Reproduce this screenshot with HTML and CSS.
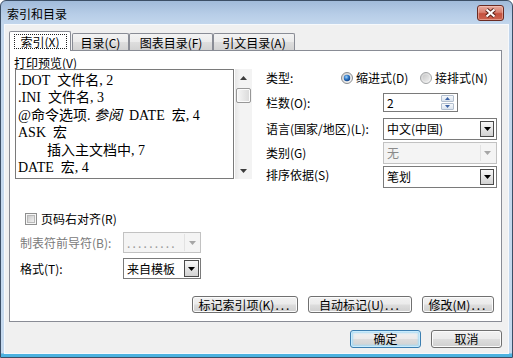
FILE: index.html
```html
<!DOCTYPE html>
<html lang="zh-CN">
<head>
<meta charset="utf-8">
<title>索引和目录</title>
<link rel="stylesheet" href="styles.css">
</head>
<body>
<div class="window">
  <div class="titlebar">
    <span class="title">索引和目录</span>
    <div class="close">
      <svg width="25" height="14" viewBox="0 0 25 14"><path d="M8.5 3.5 L16.5 10.5 M16.5 3.5 L8.5 10.5" stroke="#5a2219" stroke-width="4.2"/><path d="M8.5 3.5 L16.5 10.5 M16.5 3.5 L8.5 10.5" stroke="#ffffff" stroke-width="2.2"/></svg>
    </div>
  </div>
  <div class="client">
    <div class="tabs">
      <div class="tab active t1"><span class="focus">索引(X)</span></div>
      <div class="tab t2">目录(C)</div>
      <div class="tab t3">图表目录(F)</div>
      <div class="tab t4">引文目录(A)</div>
    </div>
    <div class="panel">
      <div class="upper">
        <div class="preview-col">
          <div class="pv-label">打印预览(V)</div>
          <div class="pv-box">
            <div class="pv-text">
              <div class="pv-line">.DOT&nbsp;&nbsp;文件名, 2</div>
              <div class="pv-line">.INI&nbsp;&nbsp;文件名, 3</div>
              <div class="pv-line">@命令选项. <i class="it">参阅</i>&nbsp;&nbsp;DATE&nbsp;&nbsp;宏, 4</div>
              <div class="pv-line">ASK&nbsp;&nbsp;宏</div>
              <div class="pv-line ind">插入主文档中, 7</div>
              <div class="pv-line">DATE&nbsp;&nbsp;宏, 4</div>
            </div>
            <div class="vscroll">
              <div class="sb-btn"><svg width="7" height="4" viewBox="0 0 7 4"><path d="M3.5 0L7 4H0z" fill="#3c3c3c"/></svg></div>
              <div class="thumb"></div>
              <div class="sb-spacer"></div>
              <div class="sb-btn"><svg width="7" height="4" viewBox="0 0 7 4"><path d="M0 0H7L3.5 4z" fill="#3c3c3c"/></svg></div>
            </div>
          </div>
        </div>
        <div class="form">
          <div class="row r1">
            <span class="lbl">类型:</span>
            <svg class="radio" width="12" height="12" viewBox="0 0 12 12"><defs><linearGradient id="rg1" x1="0" y1="0" x2="1" y2="1"><stop offset="0" stop-color="#cfcfcf"/><stop offset="1" stop-color="#fbfbfb"/></linearGradient><radialGradient id="rb1" cx=".4" cy=".35" r=".7"><stop offset="0" stop-color="#a8d6f8"/><stop offset=".5" stop-color="#2f78c6"/><stop offset="1" stop-color="#0d3b80"/></radialGradient></defs><circle cx="6" cy="6" r="5.5" fill="url(#rg1)" stroke="#8a8c8e"/><circle cx="6" cy="6" r="3.2" fill="url(#rb1)"/></svg>
            <span class="rtext">缩进式(D)</span>
            <svg class="radio" width="12" height="12" viewBox="0 0 12 12"><defs><linearGradient id="rg2" x1="0" y1="0" x2="1" y2="1"><stop offset="0" stop-color="#cfcfcf"/><stop offset="1" stop-color="#fbfbfb"/></linearGradient><linearGradient id="rb2" x1="0" y1="0" x2="1" y2="1"><stop offset="0" stop-color="#c9c9c9"/><stop offset="1" stop-color="#ececec"/></linearGradient></defs><circle cx="6" cy="6" r="5.5" fill="url(#rg2)" stroke="#a2a4a6"/><circle cx="6" cy="6" r="3.4" fill="url(#rb2)"/></svg>
            <span>接排式(N)</span>
          </div>
          <div class="row r2">
            <span class="lbl">栏数(O):</span>
            <div class="spin">
              <span class="val">2</span>
              <div class="spin-btns">
                <span><svg width="5" height="3" viewBox="0 0 5 3"><path d="M2.5 0L5 3H0z" fill="#3d63a6"/></svg></span>
                <span><svg width="5" height="3" viewBox="0 0 5 3"><path d="M0 0H5L2.5 3z" fill="#3d63a6"/></svg></span>
              </div>
            </div>
          </div>
          <div class="row r3">
            <span class="lbl">语言(国家/地区)(L):</span>
            <div class="combo">
              <span class="val">中文(中国)</span>
              <span class="dd"><svg width="7" height="4" viewBox="0 0 7 4"><path d="M0 0H7L3.5 4z" fill="#000"/></svg></span>
            </div>
          </div>
          <div class="row r4">
            <span class="lbl">类别(G)</span>
            <div class="combo dis">
              <span class="val">无</span>
              <span class="dd"><svg width="7" height="4" viewBox="0 0 7 4"><path d="M0 0H7L3.5 4z" fill="#a6a6a6"/></svg></span>
            </div>
          </div>
          <div class="row r5">
            <span class="lbl">排序依据(S)</span>
            <div class="combo">
              <span class="val">笔划</span>
              <span class="dd"><svg width="7" height="4" viewBox="0 0 7 4"><path d="M0 0H7L3.5 4z" fill="#000"/></svg></span>
            </div>
          </div>
        </div>
      </div>
      <div class="lower">
        <div class="chk-row">
          <svg class="chk" width="12" height="12" viewBox="0 0 12 12"><defs><linearGradient id="cg" x1="0" y1="0" x2="1" y2="1"><stop offset="0" stop-color="#c8c8c8"/><stop offset="1" stop-color="#f3f3f3"/></linearGradient></defs><rect x=".5" y=".5" width="11" height="11" fill="#f6f6f6" stroke="#8e8f8f"/><rect x="2.5" y="2.5" width="7" height="7" fill="url(#cg)" stroke="#b9b9b9" stroke-width="1"/></svg>
          <span>页码右对齐(R)</span>
        </div>
        <div class="lrow lead">
          <span class="lbl grey">制表符前导符(B):</span>
          <div class="combo small dis">
            <span class="val dotsval">.........</span>
            <span class="dd"><svg width="7" height="4" viewBox="0 0 7 4"><path d="M0 0H7L3.5 4z" fill="#a6a6a6"/></svg></span>
          </div>
        </div>
        <div class="lrow fmt">
          <span class="lbl">格式(T):</span>
          <div class="combo small">
            <span class="val">来自模板</span>
            <span class="dd"><svg width="7" height="4" viewBox="0 0 7 4"><path d="M0 0H7L3.5 4z" fill="#000"/></svg></span>
          </div>
        </div>
      </div>
      <div class="pbtns">
        <div class="btn b1">标记索引项(K)<span class="dots">...</span></div>
        <div class="btn b2">自动标记(U)<span class="dots">...</span></div>
        <div class="btn b3">修改(M)<span class="dots">...</span></div>
      </div>
    </div>
    <div class="footer">
      <div class="btn ok">确定</div>
      <div class="btn">取消</div>
    </div>
  </div>
</div>
</body>
</html>
```

FILE: styles.css
```css
* { box-sizing: border-box; margin: 0; padding: 0; }
html, body { width: 513px; height: 358px; overflow: hidden; }
body {
  font-family: "Noto Sans CJK SC", "Liberation Sans", sans-serif;
  font-size: 12px;
  line-height: 14px;
  color: #000;
  background: #fff;
}

.window {
  width: 513px;
  height: 358px;
  border: 1px solid #3c4f66;
  border-radius: 6px 6px 0 0;
  background: linear-gradient(to bottom, #a1bbda 0, #b7cde7 13px, #c2d6ec 23px, #c5d9ee 352px, #4cb2e0 353px);
  padding: 0 3px 3px 3px;
  display: flex;
  flex-direction: column;
}

.titlebar {
  height: 23px;
  display: flex;
  align-items: center;
  padding-left: 3px;
}
.title { margin-top: 2px; }
.close {
  margin-left: auto;
  margin-right: 5px;
  margin-top: 1px;
  width: 27px;
  height: 16px;
  border: 1px solid #6a2a22;
  border-radius: 3px;
  background: linear-gradient(to bottom, #e8aa9e 0%, #d98070 45%, #c4503e 55%, #cc6450 100%);
  box-shadow: inset 0 0 0 1px rgba(255, 215, 205, 0.45);
  display: flex;
  align-items: center;
  justify-content: center;
}

.client {
  flex: 1;
  background: #f0f0f0;
  border: 1px solid #f6f9fc;
  display: flex;
  flex-direction: column;
  padding: 6px 6px 0 4px;
}

/* tabs */
.tabs {
  display: flex;
  align-items: flex-end;
  height: 20px;
  position: relative;
  z-index: 2;
}
.tab {
  height: 17px;
  margin-bottom: 1px;
  border: 1px solid #898c95;
  border-bottom: 0;
  border-radius: 2px 2px 0 0;
  background: linear-gradient(#f3f3f3 0%, #ebebeb 50%, #dedede 50%, #d2d2d2 100%);
  display: flex;
  align-items: center;
  justify-content: center;
  padding-top: 1px;
  white-space: nowrap;
}
.tab.active {
  height: 20px;
  margin-bottom: 0;
  background: #fff;
  padding-top: 0;
}
.t1 { width: 62px; }
.t2 { width: 57px; margin-left: 1px; }
.t3 { width: 84px; }
.t4 { width: 82px; }
.focus {
  border: 1px dotted #222;
  padding: 0 6px;
  line-height: 13px;
}

/* panel */
.panel {
  margin-top: -1px;
  width: 493px;
  height: 272px;
  border: 1px solid #898c95;
  background: #fff;
  display: flex;
  flex-direction: column;
}
.upper {
  display: flex;
  align-items: flex-start;
  height: 137px;
  flex: none;
}
.preview-col { margin-left: 4px; padding-top: 5px; }
.pv-label { height: 13px; line-height: 13px; }
.pv-box { display: flex; margin-left: 1px; }
.pv-text {
  width: 219px;
  height: 110px;
  border: 1px solid #7a7a7a;
  padding: 2px 0 0 2px;
  font-family: "Liberation Serif", "Noto Sans CJK SC", serif;
  font-size: 14px;
}
.pv-line {
  height: 17.4px;
  line-height: 17.4px;
  white-space: nowrap;
}
.ind { padding-left: 29px; }
.it { font-style: italic; }

.vscroll {
  width: 17px;
  height: 110px;
  margin-left: 1px;
  background: linear-gradient(to right, #e6e6e6, #f3f3f3 30%, #f3f3f3);
  display: flex;
  flex-direction: column;
  align-items: center;
}
.sb-btn {
  height: 17px;
  width: 17px;
  display: flex;
  align-items: center;
  justify-content: center;
}
.sb-btn svg { display: block; }
.thumb {
  width: 15px;
  height: 15px;
  margin-top: 2px;
  border: 1px solid #979797;
  border-radius: 2px;
  background: linear-gradient(to right, #f7f7f7, #e8e8e8 50%, #d9d9d9);
  box-shadow: inset 0 0 0 1px #fbfbfb;
}
.sb-spacer { flex: 1; }

/* form */
.form {
  margin-left: 14px;
  padding-top: 19px;
  display: flex;
  flex-direction: column;
}
.row { display: flex; align-items: center; white-space: nowrap; }
.lbl { width: 117px; flex: none; white-space: nowrap; }
.r1 { height: 16px; }
.r1 .lbl { width: 75px; }
.radio { display: block; flex: none; margin-right: 3px; }
.rtext { width: 64px; flex: none; }
.r2 { height: 19px; margin-top: 7px; }
.r3 { height: 22px; margin-top: 6px; }
.r4 { height: 21px; margin-top: 2px; }
.r5 { height: 22px; margin-top: 3px; align-items: flex-start; }
.r5 .lbl { padding-top: 2px; }

.spin {
  width: 75px;
  height: 19px;
  border: 1px solid #7a7a7a;
  background: #fff;
  display: flex;
  align-items: center;
  padding-left: 3px;
}
.spin-btns {
  margin-left: auto;
  margin-right: 3px;
  width: 13px;
  height: 15px;
  display: flex;
  flex-direction: column;
  gap: 1px;
}
.spin-btns span {
  flex: 1;
  border: 1px solid #b3bfcf;
  border-radius: 1px;
  background: linear-gradient(#f6f9fc, #dbe4ef);
  display: flex;
  align-items: center;
  justify-content: center;
}
.spin-btns svg { display: block; }

.combo {
  width: 114px;
  height: 22px;
  border: 1px solid #7a7a7a;
  background: #fff;
  display: flex;
  align-items: center;
  padding-left: 3px;
}
.combo .val { flex: 1; white-space: nowrap; }
.dd {
  width: 14px;
  align-self: stretch;
  margin: 2px 2px 2px 0;
  border: 1px solid #4a4a4a;
  background: linear-gradient(#f8f8f8, #d2d2d2);
  display: flex;
  align-items: center;
  justify-content: center;
}
.dd svg { display: block; }
.combo.dis {
  background: #f4f4f4;
  border-color: #c2c2c2;
  color: #8a8a8a;
}
.combo.dis .dd {
  border: 0;
  border-left: 1px solid #e2e2e2;
  background: none;
}
.combo.small { width: 78px; height: 21px; }
.combo.small .dd { margin: 1px 1px 1px 0; width: 15px; }

/* lower */
.lower { margin-top: 23px; display: flex; flex-direction: column; }
.chk-row {
  height: 15px;
  display: flex;
  align-items: center;
  padding-left: 15px;
}
.chk { display: block; margin-right: 4px; }
.lrow {
  display: flex;
  align-items: center;
  height: 21px;
  padding-left: 10px;
}
.lrow .lbl { width: 103px; }
.grey { color: #7a7a7a; }
.lead { margin-top: 6px; }
.fmt { margin-top: 5px; }
.dotsval { letter-spacing: 2.2px; color: #9a9a9a; }

/* buttons */
.pbtns {
  margin-top: auto;
  margin-bottom: 8px;
  display: flex;
  justify-content: flex-end;
  gap: 10px;
  padding-right: 7px;
}
.btn {
  height: 17px;
  border: 1px solid #707070;
  border-radius: 3px;
  background: linear-gradient(#f2f2f2 0%, #ebebeb 48%, #dddddd 52%, #cfcfcf 100%);
  box-shadow: inset 0 0 0 1px #fbfbfb;
  display: flex;
  align-items: center;
  justify-content: center;
  white-space: nowrap;
}
.dots { letter-spacing: 2px; margin-left: 1px; }
.b1 { width: 106px; }
.b2 { width: 104px; }
.b3 { width: 72px; }

.footer {
  margin-top: 8px;
  display: flex;
  justify-content: flex-end;
  gap: 10px;
}
.footer .btn { width: 71px; height: 18px; }
.btn.ok {
  border-color: #3c7fb1;
  box-shadow: inset 0 0 0 1px #c9ecfd, inset 0 0 2px 2px #a9dcf6;
}
```
